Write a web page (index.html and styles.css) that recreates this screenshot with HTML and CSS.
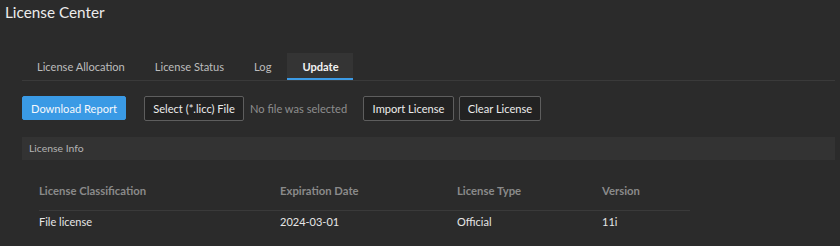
FILE: index.html
```html
<!DOCTYPE html>
<html lang="en">
<head>
  <meta charset="UTF-8">
  <title>License Center</title>
  <link rel="stylesheet" href="styles.css">
</head>
<body>
  <header class="page-title">License Center</header>
  <main class="panel">
    <nav class="tabs">
      <div class="tab">License Allocation</div>
      <div class="tab">License Status</div>
      <div class="tab log">Log</div>
      <div class="tab active">Update</div>
    </nav>
    <section class="toolbar">
      <button class="btn primary">Download Report</button>
      <button class="btn select">Select (*.licc) File</button>
      <span class="file-name">No file was selected</span>
      <button class="btn import">Import License</button>
      <button class="btn clear">Clear License</button>
    </section>
    <section class="info-bar">License Info</section>
    <table class="info-table">
      <thead>
        <tr>
          <th class="c1">License Classification</th>
          <th class="c2">Expiration Date</th>
          <th class="c3">License Type</th>
          <th class="c4">Version</th>
        </tr>
      </thead>
      <tbody>
        <tr>
          <td>File license</td>
          <td>2024-03-01</td>
          <td>Official</td>
          <td>11i</td>
        </tr>
      </tbody>
    </table>
  </main>
</body>
</html>
```

FILE: styles.css
```css
* {
    margin: 0;
    padding: 0;
    box-sizing: border-box;
}
body {
    background: #2b2b2b;
    font-family: Lato, "Noto Sans", sans-serif;
    color: #dcdcdc;
    width: 840px;
    height: 246px;
    overflow: hidden;
}
.page-title {
    padding: 1px 0 0 5px;
    height: 53px;
    font-size: 15.3px;
    line-height: 22px;
    color: #ececec;
}
.panel {
    padding: 0 5px 0 22px;
}
.tabs {
    display: flex;
    border-bottom: 1px solid #3a3a3a;
    height: 28px;
}
.tab {
    padding: 0 15px;
    font-size: 11.1px;
    line-height: 27px;
    color: #bdbdbd;
    border-bottom: 2px solid transparent;
    white-space: nowrap;
}
.tab.log {
    padding-right: 16px;
}
.tab.active {
    background: #343434;
    color: #f2f2f2;
    border-bottom-color: #3c9be6;
    font-weight: bold;
    padding: 0 14px 0 15px;
}
.toolbar {
    display: flex;
    align-items: center;
    margin-top: 14px;
    height: 26px;
}
.btn {
    font-family: inherit;
    font-size: 11.1px;
    height: 25px;
    padding: 0;
    background: #222222;
    color: #ececec;
    border: 1px solid #5e5e5e;
    border-radius: 2px;
    white-space: nowrap;
}
.btn.primary {
    background: #3a9ae5;
    border-color: #3a9ae5;
    color: #f5f8fc;
    margin-right: 18px;
    width: 104px;
    height: 24px;
}
.btn.select {
    width: 100px;
    margin-right: 6px;
}
.file-name {
    font-size: 11.1px;
    color: #8e8e8e;
    width: 113px;
    white-space: nowrap;
}
.btn.import {
    width: 91px;
    margin-right: 5px;
}
.btn.clear {
    width: 82px;
}
.info-bar {
    margin-top: 16px;
    height: 23px;
    line-height: 23px;
    background: #333333;
    padding-left: 7px;
    font-size: 10.4px;
    color: #b4b4b4;
}
.info-table {
    margin: 20px 0 0 17px;
    border-collapse: collapse;
    font-size: 11px;
    text-align: left;
}
.info-table th {
    font-weight: bold;
    font-size: 11.3px;
    color: #8a8a8a;
    height: 30px;
    line-height: 22px;
    padding: 0 0 8px;
    vertical-align: top;
    border-bottom: 1px solid #3a3a3a;
}
.info-table td {
    height: 22px;
    padding: 0;
    color: #e6e6e6;
}
.c1 { width: 241px; }
.c2 { width: 177px; }
.c3 { width: 145px; }
.c4 { width: 88px; }
```
